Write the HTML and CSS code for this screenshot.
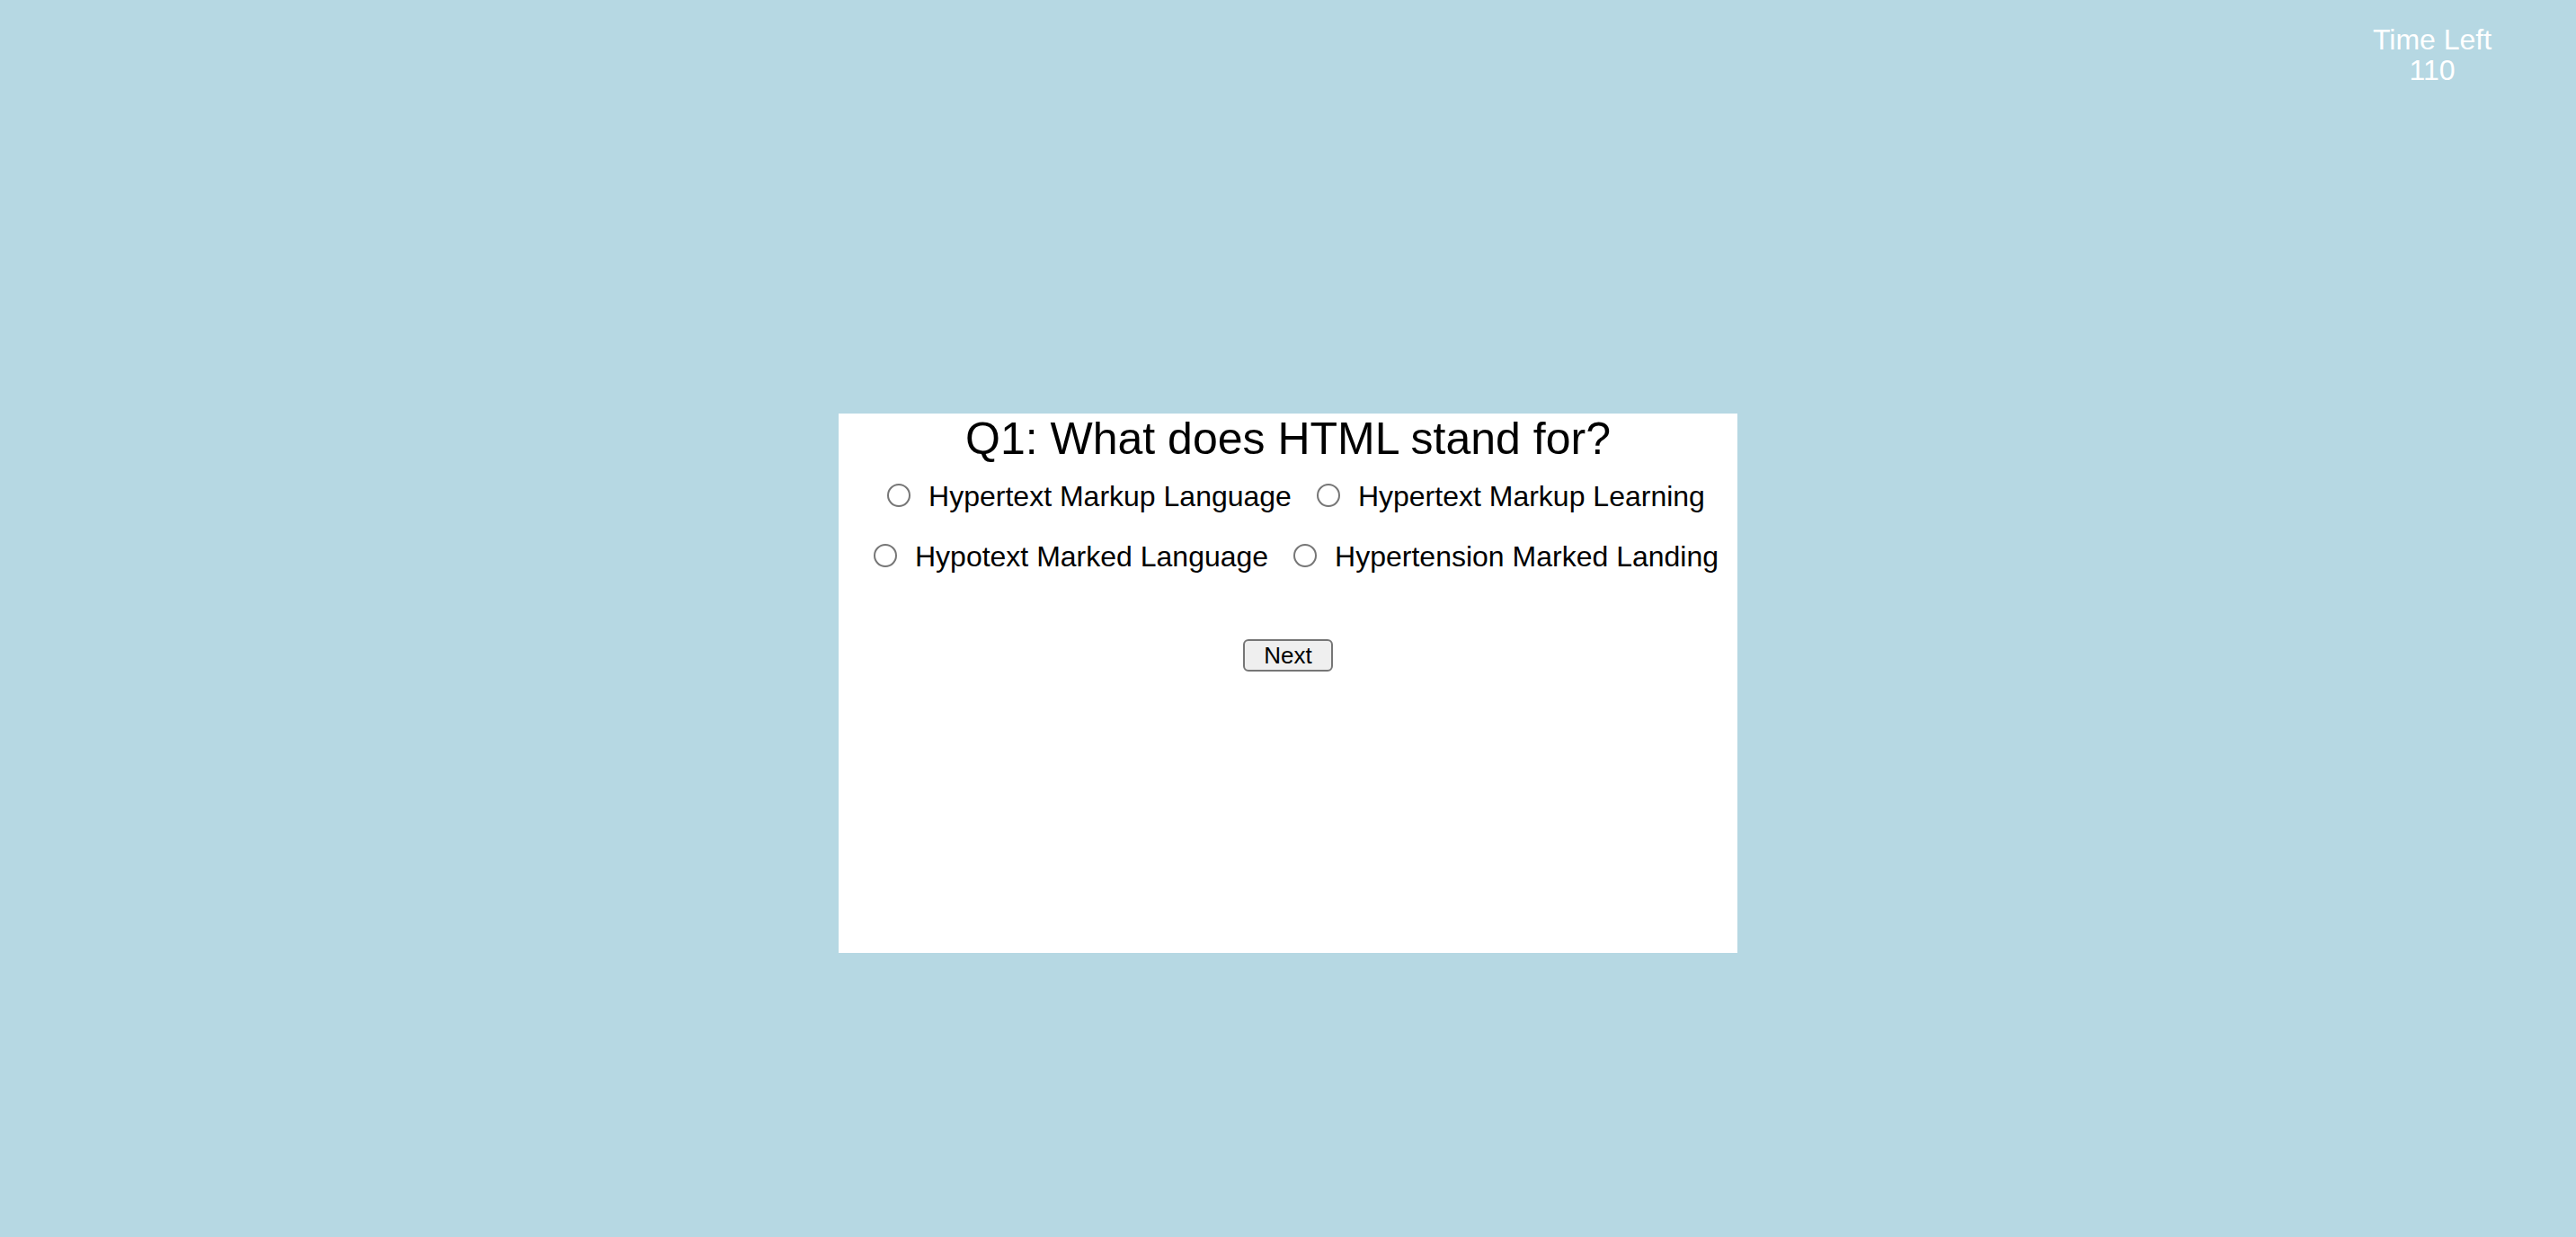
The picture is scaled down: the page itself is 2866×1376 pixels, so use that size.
FILE: index.html
```html
<!DOCTYPE html>
<html lang="en">
<head>
<meta charset="utf-8">
<title>Quiz</title>
<link rel="stylesheet" href="styles.css">
</head>
<body>
<header class="topbar">
  <div class="timer">
    <div class="timer-label">Time Left</div>
    <div class="timer-value">110</div>
  </div>
</header>
<main class="quiz">
  <h1 class="question">Q1: What does HTML stand for?</h1>
  <div class="options">
    <div class="row">
      <label class="option"><input type="radio" name="q1" class="radio"><span>Hypertext Markup Language</span></label>
      <label class="option"><input type="radio" name="q1" class="radio"><span>Hypertext Markup Learning</span></label>
    </div>
    <div class="row">
      <label class="option"><input type="radio" name="q1" class="radio"><span>Hypotext Marked Language</span></label>
      <label class="option"><input type="radio" name="q1" class="radio"><span>Hypertension Marked Landing</span></label>
    </div>
  </div>
  <div class="actions">
    <button class="next" type="button">Next</button>
  </div>
</main>
</body>
</html>
```
FILE: styles.css
```css
html, body {
  margin: 0;
  padding: 0;
}

body {
  background: #b6d8e3;
  font-family: "Liberation Sans", Arial, Helvetica, sans-serif;
  color: #000;
  min-height: 100vh;
}

.topbar {
  display: flex;
  justify-content: flex-end;
  padding: 27px 60px 0 0;
}

.timer {
  width: 200px;
  text-align: center;
  color: #fff;
  font-size: 32px;
  line-height: 34px;
}

.quiz {
  width: 1000px;
  height: 600px;
  margin: 365px auto 0;
  background: #fff;
}

.question {
  margin: 0;
  font-size: 50px;
  font-weight: normal;
  line-height: 56px;
  text-align: center;
}

.options {
  display: flex;
  flex-direction: column;
  gap: 27px;
  margin-top: 16px;
  padding-left: 18px;
}

.row {
  display: flex;
  justify-content: center;
  align-items: center;
  gap: 28px;
  height: 40px;
  font-size: 32px;
  line-height: 40px;
}

.option {
  display: flex;
  align-items: center;
  gap: 20px;
}

.radio {
  appearance: none;
  -webkit-appearance: none;
  box-sizing: border-box;
  margin: 0 0 3px 0;
  width: 26px;
  height: 26px;
  border: 2px solid #767676;
  border-radius: 50%;
  background: #fff;
}

.actions {
  display: flex;
  justify-content: center;
  margin-top: 72px;
}

.next {
  box-sizing: border-box;
  height: 36px;
  padding: 0 21px;
  font-family: inherit;
  font-size: 26px;
  line-height: 30px;
  color: #000;
  background: #efefef;
  border: 2px solid #767676;
  border-radius: 6px;
}
```
